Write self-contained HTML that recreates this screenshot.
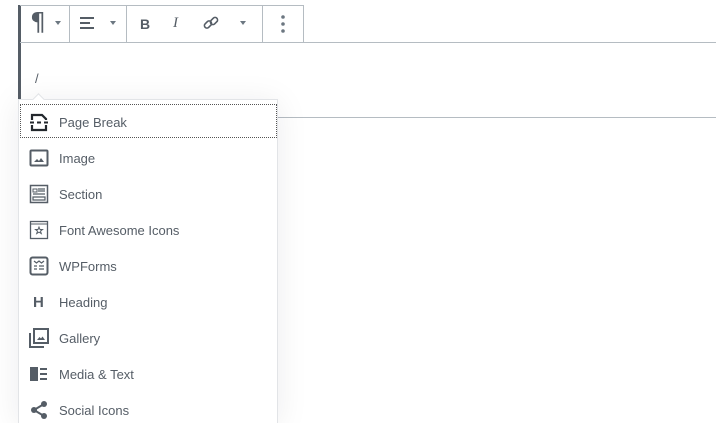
<!DOCTYPE html>
<html><head><meta charset="utf-8"><style>
*{margin:0;padding:0;box-sizing:border-box}
body{width:716px;height:423px;overflow:hidden;background:#fff;font-family:"Liberation Sans",sans-serif;position:relative}
.abs{position:absolute}
.bar{left:18px;top:5px;width:3px;height:95px;background:#555d66}
.tb{left:20px;top:5px;width:284px;height:38px;border:1px solid #b5bcc2;border-left:none}
.sep{top:5px;width:1px;height:38px;background:#b5bcc2}
.hl{height:1px;background:#b5bcc2}
.pop{left:18px;top:99px;width:260px;height:324px;background:#fff;border:1px solid #e2e4e7;border-bottom:none;box-shadow:0 3px 30px rgba(25,30,35,0.08)}
.focus{left:20px;top:104px;width:257px;height:34px;border:1px dotted #555}
.item{left:59px;font-size:13px;color:#555d66;line-height:16px}
svg.i{position:absolute;left:29px}
</style></head><body>
<div class="abs bar"></div>
<div class="abs tb"></div>
<div class="abs sep" style="left:69px"></div>
<div class="abs sep" style="left:126px"></div>
<div class="abs sep" style="left:262px"></div>
<div class="abs hl" style="left:20px;top:42px;width:696px"></div>
<div class="abs hl" style="left:277px;top:117px;width:439px"></div>
<div class="abs" style="left:30px;top:8px;font-size:25px;line-height:28px;color:#555d66;font-family:'DejaVu Sans';">¶</div>
<div class="abs" style="left:55px;top:21px;width:0;height:0;border-left:3px solid transparent;border-right:3px solid transparent;border-top:4px solid #6c7781"></div>
<svg class="abs" style="left:80px;top:17px" width="16" height="14"><rect x="0" y="0" width="14" height="2" fill="#555d66"/><rect x="0" y="5" width="10" height="2" fill="#555d66"/><rect x="0" y="10" width="14" height="2" fill="#555d66"/></svg>
<div class="abs" style="left:110px;top:21px;width:0;height:0;border-left:3px solid transparent;border-right:3px solid transparent;border-top:4px solid #6c7781"></div>
<div class="abs" style="left:140px;top:16px;font-size:14px;font-weight:bold;color:#555d66">B</div>
<div class="abs" style="left:173px;top:15px;font-size:15px;font-style:italic;font-family:'Liberation Serif';color:#555d66">I</div>
<svg class="abs" style="left:203px;top:15px" width="16" height="16" viewBox="0 0 16 16"><g fill="none" stroke="#555d66" stroke-width="1.6"><rect x="1" y="7" width="8" height="5" rx="2.5" transform="rotate(-45 5 9.5)"/><rect x="7" y="3.5" width="8" height="5" rx="2.5" transform="rotate(-45 11 6)"/></g></svg>
<div class="abs" style="left:240px;top:21px;width:0;height:0;border-left:3px solid transparent;border-right:3px solid transparent;border-top:4px solid #6c7781"></div>
<svg class="abs" style="left:280px;top:14px" width="6" height="20"><circle cx="3" cy="3" r="1.8" fill="#6c7781"/><circle cx="3" cy="10" r="1.8" fill="#6c7781"/><circle cx="3" cy="17" r="1.8" fill="#6c7781"/></svg>
<div class="abs" style="left:35px;top:71px;font-size:13px;color:#555d66">/</div>
<div class="abs pop"></div>
<div class="abs" style="left:34px;top:95px;width:9px;height:9px;background:#fff;border-left:1px solid #e2e4e7;border-top:1px solid #e2e4e7;transform:rotate(45deg)"></div>
<div class="abs focus"></div>
<svg class="i" style="top:112px" width="20" height="20" viewBox="0 0 20 20"><path d="M3 8V3h10l4 4v1M3 13v5h14v-5" fill="none" stroke="#23282d" stroke-width="2.2"/><path d="M1 10.5h4M8 10.5h4M15 10.5h4" stroke="#23282d" stroke-width="2"/></svg>
<div class="abs item" style="top:115px">Page Break</div>
<svg class="i" style="top:148px" width="20" height="20" viewBox="0 0 20 20"><rect x="1.5" y="2.5" width="17" height="15" rx="1" fill="none" stroke="#555d66" stroke-width="2"/><path d="M5 14l3-3 2 2 2-3 3 4z" fill="#555d66"/></svg>
<div class="abs item" style="top:151px">Image</div>
<svg class="i" style="top:184px" width="20" height="20" viewBox="0 0 20 20"><rect x="1.5" y="1.5" width="17" height="17" fill="none" stroke="#555d66" stroke-width="1.5"/><rect x="4" y="5" width="4" height="3" fill="none" stroke="#555d66"/><path d="M9 5h7M9 7h7M4 10h12M4 13h12v3H4z" fill="none" stroke="#555d66" stroke-width="1.2"/></svg>
<div class="abs item" style="top:187px">Section</div>
<svg class="i" style="top:220px" width="20" height="20" viewBox="0 0 20 20"><rect x="1.5" y="1.5" width="17" height="17" fill="none" stroke="#555d66" stroke-width="1.3"/><path d="M2 4h16" stroke="#555d66"/><path d="M10 7l1 2.5h2.5l-2 1.6.8 2.5-2.3-1.5-2.3 1.5.8-2.5-2-1.6H9z" fill="none" stroke="#555d66"/></svg>
<div class="abs item" style="top:223px">Font Awesome Icons</div>
<svg class="i" style="top:256px" width="20" height="20" viewBox="0 0 20 20"><rect x="1.5" y="1.5" width="17" height="17" rx="2" fill="none" stroke="#555d66" stroke-width="2"/><path d="M5 5l2.5 2 2.5-2 2.5 2 2.5-2M5 10h3M10 10h5M5 13h3M10 13h5" fill="none" stroke="#555d66" stroke-width="1.2"/></svg>
<div class="abs item" style="top:259px">WPForms</div>
<div class="abs" style="left:33px;top:294px;font-size:15px;font-weight:bold;color:#555d66">H</div>
<div class="abs item" style="top:295px">Heading</div>
<svg class="i" style="top:328px" width="20" height="20" viewBox="0 0 20 20"><path d="M1 5v14h14" fill="none" stroke="#555d66" stroke-width="2"/><rect x="5" y="1" width="14" height="14" fill="none" stroke="#555d66" stroke-width="2"/><path d="M8 12l2.5-3 1.5 1.5 1.5-2 2.5 3.5z" fill="#555d66"/></svg>
<div class="abs item" style="top:331px">Gallery</div>
<svg class="i" style="top:364px" width="20" height="20" viewBox="0 0 20 20"><rect x="1" y="3" width="8" height="14" fill="#555d66"/><path d="M11 5h7M11 10h7M11 15h7" stroke="#555d66" stroke-width="2"/></svg>
<div class="abs item" style="top:367px">Media &amp; Text</div>
<svg class="i" style="top:400px" width="20" height="20" viewBox="0 0 20 20"><path d="M15 4L5 10l10 6" fill="none" stroke="#555d66" stroke-width="2"/><circle cx="15" cy="4" r="3" fill="#555d66"/><circle cx="5" cy="10" r="3" fill="#555d66"/><circle cx="15" cy="16" r="3" fill="#555d66"/></svg>
<div class="abs item" style="top:403px">Social Icons</div>
</body></html>
